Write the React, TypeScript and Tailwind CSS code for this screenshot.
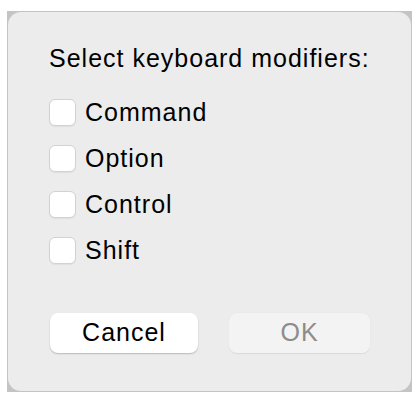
export default function App() {
  const mods = ["Command", "Option", "Control", "Shift"];

  return (
    <div className="h-[401px] w-[418px] bg-white pl-[7px] pt-[11px]" style={{ fontFamily: '"Liberation Sans", Arial, sans-serif' }}>
      <div className="h-[381px] w-[405px] bg-[#c4c4c4] p-px">
        <div className="flex h-full flex-col rounded-[13px] bg-[#ececec] pl-[41px] pt-[32px] text-[25px] tracking-[1px] text-black">
          <div className="leading-[29px]">Select keyboard modifiers:</div>

          <div className="mt-[16px] flex flex-col">
            {mods.map((m) => (
              <label key={m} className="flex h-[46px] items-center gap-[9px]">
                <span className="h-[27px] w-[27px] rounded-[6px] border border-[#d2d2d2] bg-white shadow-[0_1px_1px_rgba(0,0,0,0.06)]" />
                <span className="leading-[29px]">{m}</span>
              </label>
            ))}
          </div>

          <div className="mt-[40px] flex items-center">
            <button className="ml-px h-[40px] w-[148px] rounded-[8px] bg-white text-black shadow-[0_1px_1.5px_rgba(0,0,0,0.22)]">
              Cancel
            </button>
            <button className="ml-[31px] h-[40px] w-[141px] rounded-[8px] bg-[#f3f3f3] text-[#8c8c8c] shadow-[0_0.5px_1px_rgba(0,0,0,0.08)]">
              OK
            </button>
          </div>
        </div>
      </div>
    </div>
  );
}
